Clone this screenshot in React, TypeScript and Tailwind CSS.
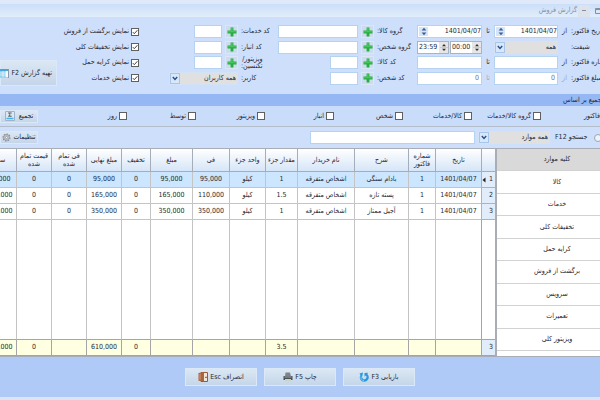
import React from 'react';

interface Sale {
  date: string;
  factor: string;
  desc: string;
  buyer: string;
  count: string;
  unit: string;
  fee: string;
  price: string;
  discount: string;
  total: string;
  costFee: string;
  cost: string;
  profit: string;
}

const COLUMNS: { key: keyof Sale; title: string; width: string }[] = [
  { key: 'date', title: 'تاریخ', width: 'w-[46px]' },
  { key: 'factor', title: 'شماره فاکتور', width: 'w-[27px]' },
  { key: 'desc', title: 'شرح', width: 'w-[54px]' },
  { key: 'buyer', title: 'نام خریدار', width: 'w-[57px]' },
  { key: 'count', title: 'مقدار جزء', width: 'w-[32px]' },
  { key: 'unit', title: 'واحد جزء', width: 'w-[36px]' },
  { key: 'fee', title: 'فی', width: 'w-[37px]' },
  { key: 'price', title: 'مبلغ', width: 'w-[42px]' },
  { key: 'discount', title: 'تخفیف', width: 'w-[29px]' },
  { key: 'total', title: 'مبلغ نهایی', width: 'w-[35px]' },
  { key: 'costFee', title: 'فی تمام شده', width: 'w-[35px]' },
  { key: 'cost', title: 'قیمت تمام شده', width: 'w-[35px]' },
  { key: 'profit', title: 'سود', width: 'w-[34px]' },
];

const SALES: Sale[] = [
  { date: '1401/04/07', factor: '1', desc: 'بادام سنگی', buyer: 'اشخاص متفرقه', count: '1', unit: 'کیلو', fee: '95,000', price: '95,000', discount: '0', total: '95,000', costFee: '0', cost: '0', profit: '95,000' },
  { date: '1401/04/07', factor: '1', desc: 'پسته تازه', buyer: 'اشخاص متفرقه', count: '1.5', unit: 'کیلو', fee: '110,000', price: '165,000', discount: '0', total: '165,000', costFee: '0', cost: '0', profit: '165,000' },
  { date: '1401/04/07', factor: '1', desc: 'آجیل ممتاز', buyer: 'اشخاص متفرقه', count: '1', unit: 'کیلو', fee: '350,000', price: '350,000', discount: '0', total: '350,000', costFee: '0', cost: '0', profit: '350,000' },
];

const TOTALS: Partial<Sale> = { count: '3.5', discount: '0', total: '610,000', cost: '0', profit: '610,000' };

const GROUPS = ['گروه کالا/خدمات', 'کالا/خدمات', 'شخص', 'انبار', 'ویزیتور', 'توسط', 'روز'];

const SECTIONS = ['کلیه موارد', 'کالا', 'خدمات', 'تخفیفات کلی', 'کرایه حمل', 'برگشت از فروش', 'سرویس', 'تعمیرات', 'ویزیتور کلی'];

const OPTIONS = ['نمایش برگشت از فروش', 'نمایش تخفیفات کلی', 'نمایش کرایه حمل', 'نمایش خدمات'];

const inputClass = 'h-[13px] min-w-0 border border-[#b5d3f0] bg-white px-0.5 text-right outline-none';
const buttonClass = 'flex shrink-0 items-center border border-[#dbe8f7] bg-linear-to-b from-[#dbe7f3] to-[#c5d6ea]';
const fieldGroup = 'grid h-[62px] grid-cols-1 grid-rows-4 items-center';

const Arrows = () => (
  <svg viewBox="0 0 8 9" className="h-[9px] w-2" fill="#3d5f96">
    <path d="M4 0.8 6.4 3.5H1.6zM4 8.2 1.6 5.5h4.8z" />
  </svg>
);

const DateInput = ({ id, label }: { id: string; label: string }) => (
  <div dir="ltr" className="flex h-[13px] min-w-0 flex-1 border border-[#b5d3f0] bg-white">
    <button aria-label="تغییر تاریخ" className="m-px flex w-[9px] items-center justify-center bg-[#d5e6fa]">
      <Arrows />
    </button>
    <input id={id} aria-label={label} defaultValue="1401/04/07" className="w-0 flex-1 bg-transparent text-right outline-none" />
  </div>
);

const TimeInput = ({ value, label }: { value: string; label: string }) => (
  <div dir="ltr" className="flex h-[13px] min-w-0 flex-1 border border-[#a9b4c2] bg-white">
    <input aria-label={label} defaultValue={value} className="w-0 flex-1 bg-transparent pl-px outline-none" />
    <button aria-label="تغییر ساعت" className="flex w-[9px] items-center justify-center bg-[#e6e6e6]">
      <svg viewBox="0 0 8 11" className="h-[11px] w-2" fill="#333">
        <path d="M4 2 6 4.3H2zM4 9 2 6.7h4z" />
        <path d="M0 5.2h8v.6H0z" fill="#bbb" />
      </svg>
    </button>
  </div>
);

const Select = ({ id, value, label, className }: { id: string; value: string; label: string; className: string }) => (
  <div className={`relative h-[13px] shrink-0 ${className}`}>
    <select id={id} aria-label={label} className="block h-[13px] w-full appearance-none border border-[#d3e2f5] bg-[#e0e0e0] pr-px pl-3 outline-none">
      <option>{value}</option>
    </select>
    <span className="pointer-events-none absolute top-px left-px flex h-[11px] w-[10px] items-center justify-center border border-[#a8c6ec] bg-[#d8e8fb]">
      <svg viewBox="0 0 6 5" className="h-[5px] w-1.5" fill="none" stroke="#2f5088" strokeWidth="1.5">
        <path d="M.8 1 3 3.4 5.2 1" />
      </svg>
    </span>
  </div>
);

const AddButton = () => (
  <button aria-label="افزودن" className="flex size-[13px] shrink-0 items-center justify-center border border-[#dae7f6] bg-[#ccdcec]">
    <svg viewBox="0 0 10 10" className="size-[10px]">
      <path d="M3.6.5h2.8v3.1h3.1v2.8H6.4v3.1H3.6V6.4H.5V3.6h3.1z" fill="#27ab42" />
      <path d="M4.2 1h1.4v3.2H9v1H1v-1h3.2z" fill="#4cc961" />
    </svg>
  </button>
);

const Check = ({ label, checked, className = '' }: { label: string; checked?: boolean; className?: string }) => (
  <label className={`flex items-center gap-0.5 whitespace-nowrap ${className}`}>
    <span className="relative size-2 shrink-0">
      <input type="checkbox" defaultChecked={checked} className="peer block size-2 appearance-none border border-[#606060] bg-white" />
      <svg viewBox="0 0 8 8" className="pointer-events-none absolute inset-0 hidden size-2 peer-checked:block" fill="none" stroke="#444" strokeWidth="1">
        <path d="M1.8 4.1 3.3 5.7 6.4 2.2" />
      </svg>
    </span>
    {label}
  </label>
);

const Label = ({ htmlFor, className, children }: { htmlFor?: string; className: string; children: React.ReactNode }) => (
  <label htmlFor={htmlFor} className={`flex shrink-0 justify-end whitespace-nowrap ${className}`}>
    {children}
  </label>
);

const Filters = () => (
  <section className="flex overflow-hidden bg-[#cddffb] pt-[7px] pb-2">
    <div className={`${fieldGroup} w-[183px] shrink-0`}>
      <div className="flex items-center">
        <Label htmlFor="date-from" className="w-[29px]">تاریخ فاکتور:</Label>
        <span className="w-[13px] text-center">از</span>
        <div className="flex w-16">
          <DateInput id="date-from" label="از تاریخ" />
        </div>
        <span className="w-3 text-center">تا</span>
        <DateInput id="date-to" label="تا تاریخ" />
      </div>
      <div className="flex items-center">
        <Label htmlFor="shift" className="w-[29px]">شیفت:</Label>
        <Select id="shift" value="همه" label="شیفت" className="mr-[13px] w-16" />
        <div className="mr-3 flex flex-1 gap-px">
          <TimeInput value="00:00" label="از ساعت" />
          <TimeInput value="23:59" label="تا ساعت" />
        </div>
      </div>
      <div className="flex items-center">
        <Label htmlFor="no-from" className="w-[29px]">شماره فاکتور:</Label>
        <span className="w-[13px] text-center">از</span>
        <input id="no-from" className={`${inputClass} w-16`} />
        <span className="w-3 text-center">تا</span>
        <input aria-label="تا شماره" className={`${inputClass} flex-1`} />
      </div>
      <div className="flex items-center">
        <Label htmlFor="price-from" className="w-[29px]">مبلغ فاکتور:</Label>
        <span className="w-[13px] text-center text-[#9aa6b8]">از</span>
        <input id="price-from" defaultValue="0" className={`${inputClass} w-16 text-[#777]`} />
        <span className="w-3 text-center text-[#9aa6b8]">تا</span>
        <input aria-label="تا مبلغ" defaultValue="0" className={`${inputClass} flex-1 text-[#777]`} />
      </div>
    </div>

    <div className={`${fieldGroup} min-w-[139px] flex-1`}>
      <div className="flex items-center gap-[3px]">
        <Label htmlFor="goods-group" className="w-10">گروه کالا:</Label>
        <AddButton />
        <input id="goods-group" className={`${inputClass} flex-1`} />
      </div>
      <div className="flex items-center gap-[3px]">
        <Label htmlFor="person-group" className="w-10">گروه شخص:</Label>
        <AddButton />
        <input id="person-group" className={`${inputClass} flex-1`} />
      </div>
      <div className="flex items-center gap-[3px]">
        <Label htmlFor="goods" className="w-10">کد کالا:</Label>
        <AddButton />
        <input id="goods" className={`${inputClass} w-7`} />
      </div>
      <div className="flex items-center gap-[3px]">
        <Label htmlFor="person" className="w-10">کد شخص:</Label>
        <AddButton />
        <input id="person" className={`${inputClass} w-7`} />
      </div>
    </div>

    <div className={`${fieldGroup} w-[109px] shrink-0`}>
      <div className="flex items-center gap-[3px]">
        <Label htmlFor="service" className="w-[37px]">کد خدمات:</Label>
        <AddButton />
        <input id="service" className={`${inputClass} w-7`} />
      </div>
      <div className="flex items-center gap-[3px]">
        <Label htmlFor="store" className="w-[37px]">کد انبار:</Label>
        <AddButton />
        <input id="store" className={`${inputClass} w-7`} />
      </div>
      <div className="flex h-[13px] items-center gap-[3px]">
        <Label htmlFor="visitor" className="w-[37px] leading-[7px]">
          <span>ویزیتور/<br />تکنسین:</span>
        </Label>
        <AddButton />
        <input id="visitor" className={`${inputClass} w-7`} />
      </div>
      <div className="flex items-center gap-[3px]">
        <Label htmlFor="user" className="w-[37px]">کاربر:</Label>
        <Select id="user" value="همه کاربران" label="کاربر" className="w-[69px]" />
      </div>
    </div>

    <div className={`${fieldGroup} mr-[30px] w-[82px] shrink-0`}>
      {OPTIONS.map((o) => (
        <Check key={o} label={o} checked />
      ))}
    </div>

    <button className={`${buttonClass} h-[26px] w-[57px] gap-0.5 self-end pr-1 whitespace-nowrap`}>
      تهیه گزارش F2
      <svg viewBox="0 0 9 9" className="size-[9px] shrink-0">
        <path d="M0 0h9v9H0z" fill="#f3f8fc" />
        <path d="M0 0h9v2H0z" fill="#4aa3dc" />
        <path d="M0 2h6v6H0z" fill="#8fd0f0" />
        <path d="M0 4h9M0 6h9M3 2v7M6 2v7" stroke="#fff" strokeWidth=".6" />
        <path d="M8.5 0v9H0" fill="none" stroke="#8a9bb0" />
      </svg>
    </button>
  </section>
);

const Grouping = () => (
  <section>
    <div className="flex h-3 items-center overflow-hidden bg-[#95b7f3]">
      <h2 className="flex w-[37px] shrink-0 justify-end whitespace-nowrap">تجمیع بر اساس</h2>
    </div>
    <div className="flex h-[21px] items-center overflow-hidden border-b border-[#b3bdca] bg-[#c9dcfa]">
      <Check label="فاکتور" className="-mr-[10px] w-[69px] shrink-0" />
      {GROUPS.map((g) => (
        <Check key={g} label={g} className={g === 'روز' ? 'flex-1' : 'w-[69px] shrink-0'} />
      ))}
      <button className={`${buttonClass} h-[13px] w-[38px] justify-center gap-1`}>
        تجمیع
        <svg viewBox="0 0 10 10" className="size-[10px]">
          <path d="M.5.5h9v9h-9z" fill="#dce9f5" stroke="#9db4cc" />
          <path d="M6.7 2H3.500L5.200 3.600 3.500 5.200h3.200" fill="none" stroke="#333" strokeWidth=".8" />
          <path d="M1.500 7.500h7" stroke="#3fb4e6" strokeWidth="1.500" />
        </svg>
      </button>
    </div>
  </section>
);

const Search = () => (
  <section className="flex h-[21px] items-center overflow-hidden bg-[#cddffb]">
    <label className="flex w-[45px] shrink-0 items-center justify-end gap-[7px] whitespace-nowrap">
      <input type="radio" name="search" className="size-2 shrink-0 appearance-none rounded-full border border-[#9aa5b5] bg-[#eef3fa]" />
      جستجو F12
    </label>
    <Select id="scope" value="همه موارد" label="محدوده جستجو" className="mr-[5px] w-[72px]" />
    <input type="search" aria-label="جستجو" className={`${inputClass} mr-[3px] w-[165px]`} />
    <button className={`${buttonClass} mr-auto h-[13px] w-[38px] justify-center gap-0.5 whitespace-nowrap`}>
      تنظیمات
      <svg viewBox="0 0 10 10" className="size-[9px] shrink-0">
        <circle cx="5" cy="5" r="3.800" fill="#b9bec4" stroke="#868d96" strokeWidth="1.400" strokeDasharray="1.600 1.300" />
        <circle cx="5" cy="5" r="3" fill="#c3c8ce" stroke="#8d949c" strokeWidth=".6" />
        <circle cx="5" cy="5" r="1.200" fill="#eef2f6" stroke="#777" strokeWidth=".5" />
      </svg>
    </button>
  </section>
);

const SalesTable = () => (
  <div className="flex min-w-0 flex-1 overflow-hidden border-r-2 border-[#a9adb5] bg-white">
    {/* the last column runs past the edge of the window */}
    <table className="h-full w-[calc(100%+17px)] shrink-0 table-fixed border-separate border-spacing-0">
      <thead>
        <tr className="h-[23px] bg-linear-to-b from-white to-[#d4e4f7]">
          <th aria-label="ردیف" className="w-[14px] border-b border-l border-[#a5adba] p-0" />
          {COLUMNS.map((c) => (
            <th key={c.key} className={`${c.width} border-b border-l border-[#a5adba] p-0 text-center leading-2 font-normal`}>
              {c.title}
            </th>
          ))}
        </tr>
      </thead>
      <tbody>
        {SALES.map((s, i) => (
          <tr key={i} className={`h-4 ${i === 0 ? 'bg-[#cce6ff]' : 'bg-white'}`}>
            <th className="border-b border-l border-[#a9b4c2] bg-[#e1edfb] p-0 font-normal">
              <div className="flex items-center gap-[3px] pr-0.5">
                {i + 1}
                {i === 0 && (
                  <svg viewBox="0 0 4 6" className="h-1.5 w-1" fill="#222">
                    <path d="M3.500 .5v5L.5 3z" />
                  </svg>
                )}
              </div>
            </th>
            {COLUMNS.map((c) => (
              <td key={c.key} className="border-b border-l border-[#c4c4c4] p-0 text-center whitespace-nowrap">
                {s[c.key]}
              </td>
            ))}
          </tr>
        ))}
        <tr>
          <td className="border-b border-l border-[#a5a5a5] p-0" />
          {COLUMNS.map((c) => (
            <td key={c.key} className="border-b border-l border-b-[#a5a5a5] border-l-[#c4c4c4] p-0" />
          ))}
        </tr>
      </tbody>
      <tfoot>
        <tr className="h-4 bg-[#ffffe1]">
          <th className="border-b border-l border-[#a5a5a5] bg-[#e1edfb] p-0 pr-0.5 text-right font-normal">3</th>
          {COLUMNS.map((c) => (
            <td key={c.key} className="border-b border-l border-[#a5a5a5] p-0 text-center">{TOTALS[c.key]}</td>
          ))}
        </tr>
      </tfoot>
    </table>
  </div>
);

const Sections = () => (
  <nav className="-mr-[17px] flex w-[120px] shrink-0 flex-col bg-white pb-[5px]">
    {SECTIONS.map((s, i) => (
      <button key={s} className={`flex-1 border-b border-[#d2d2d2] ${i === 0 ? 'bg-[#d9d9d9]' : 'bg-white'}`}>
        {s}
      </button>
    ))}
  </nav>
);

const RefreshIcon = () => (
  <svg viewBox="0 0 10 10" className="size-[10px]">
    <path d="M.5 1.500 4 .5 3.500 3.200A3 3 0 0 0 5 7.500 2.500 2.500 0 0 0 7 3.500L5.500 4.500V1L9 .8 8.300 2A4.500 4.500 0 0 1 5 9.800 4.400 4.400 0 0 1 1.500 3z" fill="#2b97dc" />
    <path d="M2 4.500A3.600 3.600 0 0 0 5 8.700" fill="none" stroke="#7fd0f7" strokeWidth=".9" />
  </svg>
);

const PrintIcon = () => (
  <svg viewBox="0 0 10 10" className="size-[10px]">
    <path d="M2.500 .5h4.500l1 4H2z" fill="#7d848c" />
    <path d="M.5 4h9v4h-9z" fill="#4a4f55" />
    <path d="M1.500 4.500h7v1h-7z" fill="#a5adb5" />
    <path d="M2 7h6v2.500H2z" fill="#c9d6c4" />
  </svg>
);

const ExitIcon = () => (
  <svg viewBox="0 0 10 10" className="size-[10px]">
    <path d="M3 .5h6.500v9H3z" fill="#f2e6dc" stroke="#9a5a38" />
    <path d="M.5 1 6 .3v9.200L.5 8.700z" fill="#a9653e" />
    <path d="M1.300 2l1.500-.2v5.900l-1.500-.2z" fill="#c98a60" />
    <path d="M7 5.300h2" stroke="#c33" strokeWidth="1" />
  </svg>
);

const App: React.FC = () => {
  const actions = [
    { label: 'بازیابی F3', icon: <RefreshIcon /> },
    { label: 'چاپ F5', icon: <PrintIcon /> },
    { label: 'انصراف Esc', icon: <ExitIcon /> },
  ];

  return (
    <main
      dir="rtl"
      lang="fa"
      className="flex min-h-screen flex-col overflow-hidden bg-[#d9e6fa] pb-[3px] font-['DejaVu_Sans_Condensed','DejaVu_Sans',sans-serif] text-[7px] leading-[9px] text-[#1f2733]"
    >
      <header className="flex h-[17px] items-center border-t-4 border-[#dfe9f9] bg-linear-to-b from-[#cbdff9] to-[#e2edfb]">
        <button aria-label="بزرگ کردن" className="flex h-3 w-[10px] items-center overflow-hidden">
          <svg viewBox="0 0 8 6" className="-mr-[3px] h-1.5 w-2 shrink-0" fill="none" stroke="#888f99">
            <path d="M.5.5h7v5h-7zM.5 1.500h7" />
          </svg>
        </button>
        <button aria-label="کوچک کردن" className="flex h-3 w-3 items-center justify-center bg-[#dde3ec]">
          <span className="h-px w-1 bg-[#888f99]" />
        </button>
        <h1 className="mr-px text-[7px] text-[#858c99]">گزارش فروش</h1>
      </header>

      <Filters />
      <Grouping />
      <Search />

      <div className="flex min-h-[208px] flex-1 border-y border-[#a9adb5]">
        <Sections />
        <SalesTable />
      </div>

      <footer className="flex h-10 items-center justify-center gap-[7px] bg-[#b0caf8]">
        {actions.map((a) => (
          <button key={a.label} className={`${buttonClass} h-[18px] w-[72px] justify-center gap-0.5`}>
            {a.label}
            {a.icon}
          </button>
        ))}
      </footer>
    </main>
  );
};

export default App;
